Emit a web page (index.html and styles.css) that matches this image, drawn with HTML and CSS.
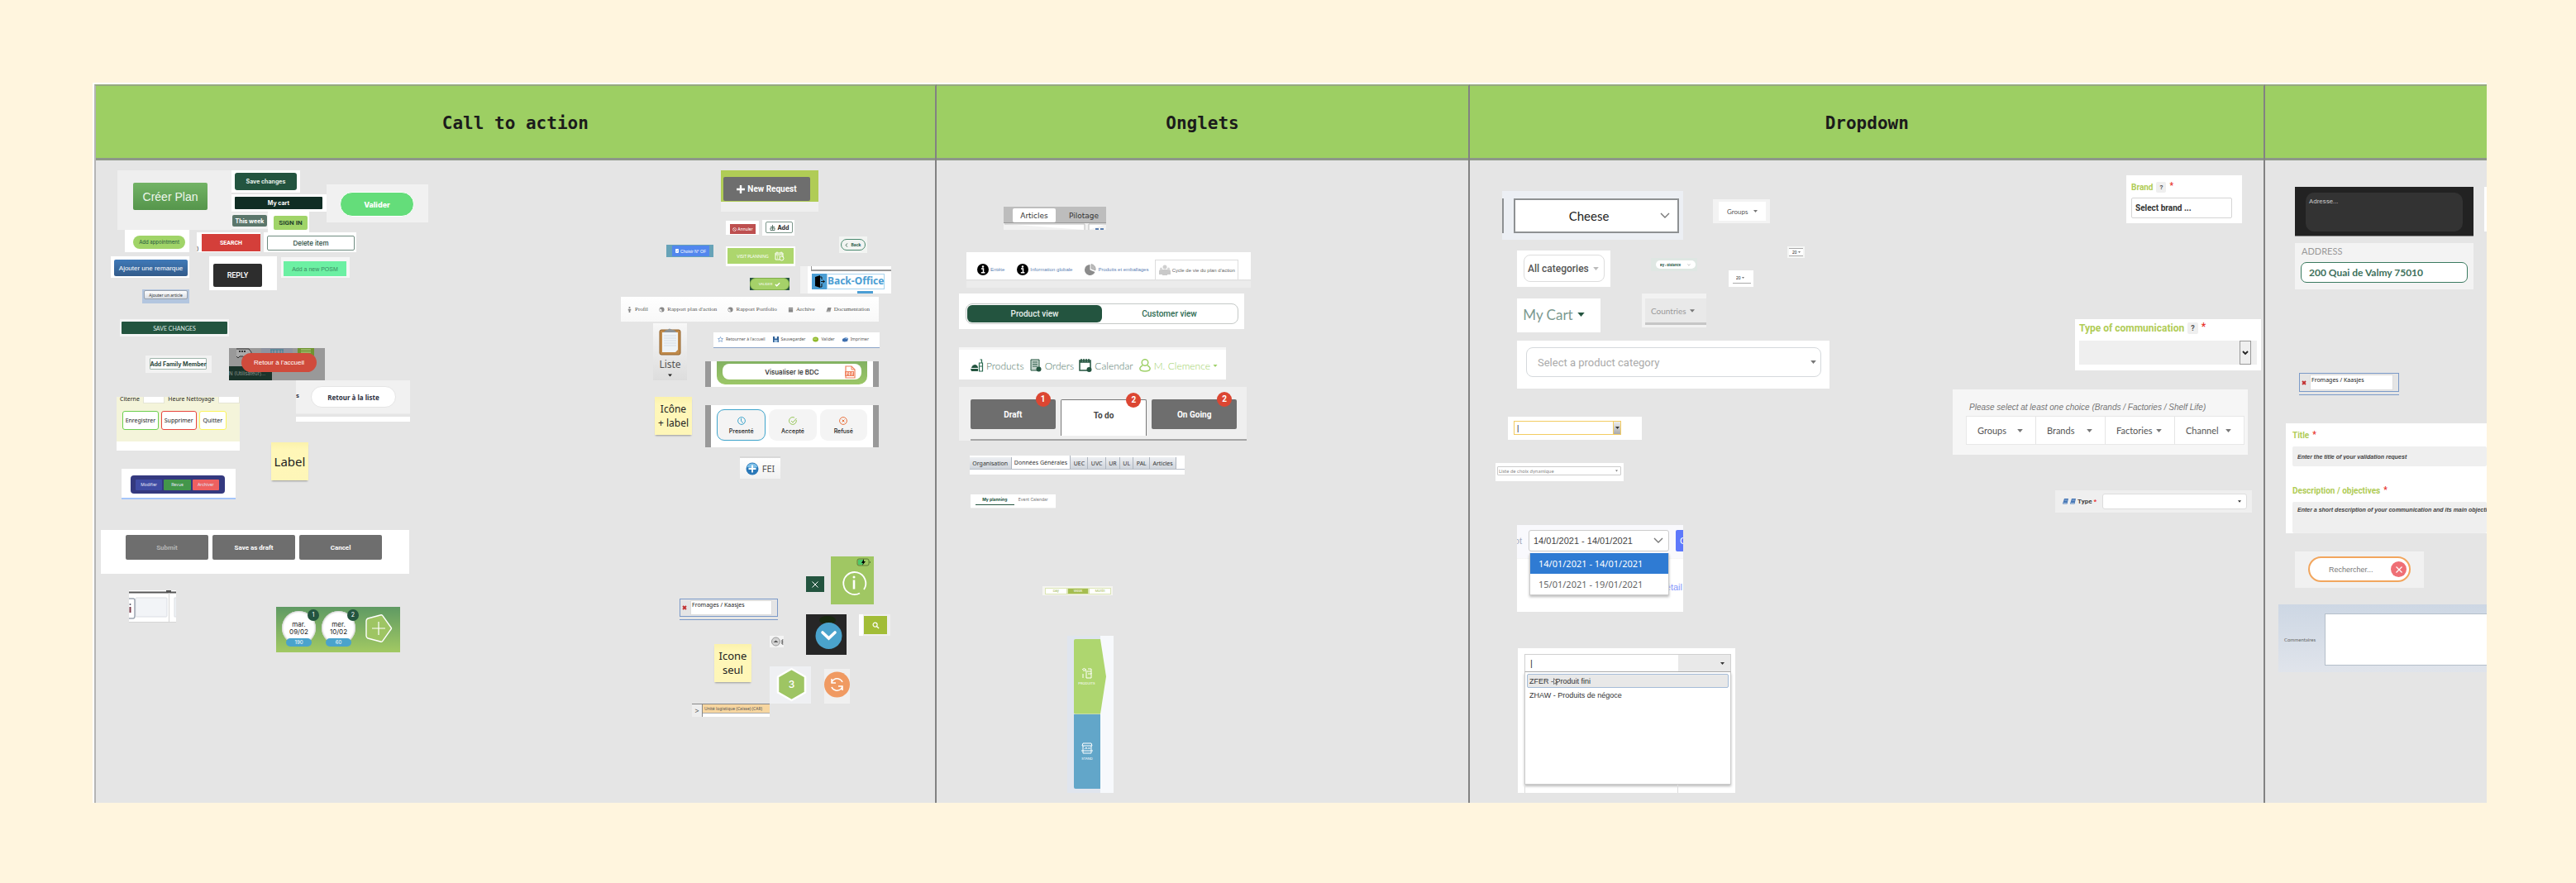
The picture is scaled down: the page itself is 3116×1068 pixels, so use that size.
FILE: index.html
```html
<!DOCTYPE html>
<html lang="fr">
<head>
<meta charset="utf-8">
<title>UI inventory</title>
<link rel="stylesheet" href="styles.css">
</head>
<body>
<svg class="defs" aria-hidden="true">
  <symbol id="caret" viewBox="0 0 10 6"><path d="M0 0h10L5 6z" fill="currentColor"/></symbol>
  <symbol id="chevron" viewBox="0 0 12 8"><path d="M1 1l5 5 5-5" fill="none" stroke="currentColor" stroke-width="1.4"/></symbol>
  <symbol id="info" viewBox="0 0 14 14"><circle cx="7" cy="7" r="7" fill="#000"/><path d="M5 6h2.500v4.500M4.800 10.700h4.600" stroke="#fff" stroke-width="1.500" fill="none"/><circle cx="7" cy="3.500" r="1.200" fill="#fff"/></symbol>
  <symbol id="cube" viewBox="0 0 8 8"><circle cx="4" cy="4" r="3.500" fill="#888"/><path d="M4 4L1 2.500v3L4 7z" fill="#eee"/></symbol>
  <symbol id="cross" viewBox="0 0 6 6"><path d="M1 1l4 4M5 1L1 5" stroke="#c22f2f" stroke-width="1.800"/></symbol>
  <symbol id="book" viewBox="0 0 7 7"><path d="M2 0h5L5.500 6.500H0z" fill="#4a7ab8"/><path d="M2.500 2h3M1 5.500h4" stroke="#cfdcec" stroke-width=".6"/></symbol>
</svg>
<main class="board">

  <section class="column">
    <h2>Call to action</h2>
    <div class="pin plan"><button>Créer Plan</button></div>
    <div class="pin save"><button>Save changes</button></div>
    <div class="pin cart"><button>My cart</button></div>
    <div class="pin week"><button>This week</button></div>
    <div class="pin signin"><button>SIGN IN</button></div>
    <div class="pin valider"><button>Valider</button></div>
    <div class="pin appointment"><button>Add appointment</button></div>
    <div class="pin search"><span>)</span><button>SEARCH</button></div>
    <div class="pin delete"><button>Delete item</button></div>
    <div class="pin remark"><button>Ajouter une remarque</button></div>
    <div class="pin reply"><button>REPLY</button></div>
    <div class="pin posm"><button>Add a new POSM</button></div>
    <div class="pin article"><button>Ajouter un article</button></div>
    <div class="pin savebar"><button>SAVE CHANGES</button></div>
    <div class="pin family"><button>Add Family Member</button></div>
    <div class="pin home">
      <svg class="home-art" viewBox="0 0 116 39" aria-hidden="true">
        <rect x="39" width="38" height="20" fill="#8e93a0"/>
        <path d="M9 1h15l3 4v5h-4l-3 3-3-3h-4l-2 2-2-2" fill="#aaa" stroke="#333"/><path d="M12 4h9" stroke="#333" stroke-width="2" stroke-dasharray="2 1"/>
        <path d="M50 2h16M51 2v5h14V2M54 2v5M58 2v5M62 2v5" stroke="#3b7e93" fill="none"/>
        <rect x="83" width="20" height="9" fill="#6f9432"/><path d="M87 2h12M87 5h12" stroke="#b9cf8d"/>
        <rect y="22" width="52" height="17" fill="#1a332a"/>
      </svg>
      <small>N (Utilisateur)...</small>
      <button>Retour à l'accueil</button>
    </div>
    <div class="pin list"><b>s</b><button>Retour à la liste</button></div>
    <div class="pin cleaning">
      <div class="cleaning-fields"><label for="tank">Citerne</label><input id="tank"><label for="hour">Heure Nettoyage</label><input id="hour" class="cut"></div>
      <div class="cleaning-actions"><button class="ok">Enregistrer</button><button class="ko">Supprimer</button><button class="quit">Quitter</button></div>
    </div>
    <div class="pin note note-label">Label</div>
    <div class="pin review"><div><button>Modifier</button><button class="go">Revue</button><button class="stop">Archiver</button></div></div>
    <div class="pin submit"><button disabled>Submit</button><button>Save as draft</button><button>Cancel</button></div>
    <div class="pin scrap">
      <svg viewBox="0 0 57 39" aria-hidden="true"><path d="M0 2.500h57" stroke="#555" stroke-width="2"/><path d="M45 0h6v3h-6z" fill="#555"/><rect x="8" y="9" width="38" height="23" rx="1" fill="#f2f4f7" stroke="#dcdfe4"/><path d="M0 10h5q2 0 2 2v19q0 3-2 3H0" fill="#fff" stroke="#9ea7b3" stroke-width="1.500"/><path d="M1.500 20v7" stroke="#7a3b4a" stroke-width="2"/><circle cx="1.500" cy="17" r="1" fill="#556"/><path d="M48.500 3v36M0 38.500h57" stroke="#d5d5d5"/><path d="M57 9h-2v23h2" fill="#eef1f5" stroke="#dcdfe4"/></svg>
    </div>
    <div class="pin days">
      <button class="day">mar.<br>09/02<i>1</i><span>190</span></button>
      <button class="day">mer.<br>10/02<i>2</i><span>60</span></button>
      <button class="add-day" aria-label="Ajouter un jour"><svg viewBox="0 0 34 36"><path d="M4 6L19 2q2-1 3 1l10 14q1 1 0 2L22 33q-1 2-3 1L4 30q-2-1-2-3V9q0-2 2-3z" fill="#9ec563" stroke="#fff" stroke-width="1.400"/><path d="M17 10v16M9 18h16" stroke="#fff" stroke-width="1.200"/></svg></button>
    </div>

    <div class="pin request"><button><svg viewBox="0 0 10 10"><path d="M5 0v10M0 5h10" stroke="#fff" stroke-width="2.400"/></svg>New Request</button></div>
    <div class="pin cancel"><button><svg viewBox="0 0 6 6"><circle cx="3" cy="3" r="2.400" fill="none" stroke="#fff" stroke-width=".7"/><path d="M1.300 1.300l3.400 3.400" stroke="#fff" stroke-width=".7"/></svg>Annuler</button></div>
    <div class="pin add"><button><svg viewBox="0 0 7 7"><path d="M3.500 0v6M1 2.500h5M.5 4h6M1 6.500h5M1 4v2.500M6 4v2.500" fill="none" stroke="#3f5f52" stroke-width=".8"/></svg>Add</button></div>
    <div class="pin back"><button><svg viewBox="0 0 4 6"><path d="M3 .5L1 3l2 2.500" fill="none" stroke="#23543f"/></svg>Back</button></div>
    <div class="pin choose"><button><svg viewBox="0 0 5 6"><rect width="5" height="6" rx="1" fill="#fff"/><path d="M1 3l1 1 2-2" stroke="#5287ee" fill="none" stroke-width=".8"/></svg>Choisir N° OF</button></div>
    <div class="pin visit"><button>VISIT PLANNING<svg viewBox="0 0 12 12"><path d="M1 2h9v5M1 2v8h5M1 4h9M3 .5v2M8 .5v2M3 6h1M5 6h1M3 8h1" fill="none" stroke="#fff"/><circle cx="8.500" cy="8.500" r="2.500" fill="none" stroke="#fff"/></svg></button></div>
    <div class="pin office">
      <a href="#"><svg viewBox="0 0 18 19"><rect width="18" height="19" fill="#4b9ed4"/><path d="M4 4l6-2v15l-6-2z"/><path d="M10 4h2v3M12 12v4h-2M11 9.500h4M13.500 8l2 1.500-2 1.500" fill="none" stroke="#111"/></svg><span>Back-Office</span></a>
      <hr>
    </div>
    <div class="pin confirm"><button>VALIDER<svg viewBox="0 0 8 6"><path d="M1 3l2 2 4-4" fill="none" stroke="#fff" stroke-width="1.600"/></svg></button></div>
    <nav class="pin sitenav">
      <a href="#"><svg viewBox="0 0 8 8"><circle cx="4" cy="1.200" r="1.200" fill="#888"/><path d="M2 3h4v2H5v3H3V5H2z" fill="#888"/></svg>Profil</a>
      <a href="#"><svg><use href="#cube"/></svg>Rapport plan d'action</a>
      <a href="#"><svg><use href="#cube"/></svg>Rapport Portfolio</a>
      <a href="#"><svg viewBox="0 0 8 8"><path d="M1 1h6v6.500H1z" fill="#888"/><path d="M1 3h6" stroke="#eee" stroke-width=".5"/></svg>Archive</a>
      <a href="#"><svg viewBox="0 0 8 8"><path d="M2.500 1h5L6 7H.5z" fill="#888"/><path d="M1.500 6h4" stroke="#eee" stroke-width=".6"/></svg>Documentation</a>
    </nav>
    <div class="pin liste"><button>
      <svg viewBox="0 0 27 34"><rect x="1" y="3" width="25" height="30" rx="2" fill="#c08a4a" stroke="#94642c"/><path d="M4 6h19v21l-3 3H4z" fill="#eef3f7"/><path d="M6 10h15M6 13h15M6 16h15M6 19h15M6 22h15" stroke="#c8d3dc" stroke-width=".7"/><path d="M6 6q1-3 5-3 1-3 5 0 4 0 5 3z" fill="#8e9498"/></svg>Liste<svg class="tri"><use href="#caret"/></svg></button></div>
    <div class="pin tools">
      <button><svg viewBox="0 0 7 7"><path d="M3.500.5l1 2h2L5 4l.5 2.300-2-1-2 1L2 4 .5 2.500h2z" fill="none" stroke="#6a93c4" stroke-width=".7"/></svg>Retourner à l'accueil</button>
      <button><svg viewBox="0 0 7 7"><rect width="7" height="7" fill="#2d5f96"/><rect x="2" width="3" height="2.500" fill="#dfe9f3"/><rect x="1.500" y="4" width="4" height="3" fill="#9fc1df"/></svg>Sauvegarder</button>
      <button><svg viewBox="0 0 8 7"><ellipse cx="4" cy="3.500" rx="4" ry="3.400" fill="#8fb92b"/><path d="M1 3h5" stroke="#dcec9f"/></svg>Valider</button>
      <button><svg viewBox="0 0 8 7"><path d="M0 3l4-2 4 1-1 4-4 1-3-1z" fill="#3f6fae"/><path d="M3 2l4-2v3z" fill="#9fc1e8"/></svg>Imprimer</button>
    </div>
    <div class="pin pdf"><div><button>Visualiser le BDC<svg viewBox="0 0 13 16"><path d="M1 15V1h7l4 4v10z" fill="none" stroke="#f0825f" stroke-width="1.200"/><path d="M8 1v4h4" fill="none" stroke="#f0825f"/><rect y="7" width="11" height="6" fill="#f0825f"/><path d="M2 12V8.500h1v1.500H2M5 8.500v3h1v-3zM8.500 12V8.500H10M8.500 10H10" fill="none" stroke="#fff" stroke-width=".7"/></svg></button></div></div>
    <div class="pin note note-icon">Icône<br>+ label</div>
    <div class="pin states"><div>
      <button class="on"><svg viewBox="0 0 10 10"><g fill="none" stroke="#3fa5cc"><circle cx="5" cy="5" r="4.400"/><path d="M4.500 2v3.500L7 7.500"/></g></svg>Presenté</button>
      <button><svg viewBox="0 0 10 10"><g fill="none" stroke="#97c65a"><path d="M9.200 4A4.400 4.400 0 1 1 7 1.100M3 5l2 2 4.500-5"/></g></svg>Accepté</button>
      <button><svg viewBox="0 0 10 10"><g fill="none" stroke="#e9733f"><circle cx="5" cy="5" r="4.400"/><path d="M3.500 3.500l3 3M6.500 3.500l-3 3"/></g></svg>Refusé</button>
    </div></div>
    <div class="pin fei"><button><svg viewBox="0 0 16 16"><circle cx="8" cy="8" r="7.500" fill="#2a78b8"/><path d="M1.500 6a7 7 0 0 1 13 0q-6 2-13 0z" fill="#7fc0e8"/><path d="M8 3.500v9M3.500 8h9" stroke="#fff" stroke-width="1.800"/></svg>FEI</button></div>

    <div class="pin infobox"><button aria-label="Information"><svg viewBox="0 0 52 58"><rect x="32" y="3" width="14" height="8" rx="2" fill="none" stroke="#5d7c38"/><rect x="33" y="4" width="6" height="6" fill="#4cc96a"/><path d="M47.500 6v2" stroke="#5d7c38"/><path d="M40 3l-3 5h2l-1 3 4-5h-2z"/><path d="M35 44.500A13.500 13.500 0 1 1 40 40" fill="none" stroke="#fff" stroke-width="1.800"/><path d="M28 28.500v11" stroke="#fff" stroke-width="2.600"/><circle cx="28" cy="25" r="1.500" fill="#fff"/></svg></button></div>
    <div class="pin close"><button aria-label="Fermer"><svg viewBox="0 0 8 8"><path d="M.5.5l7 7M7.500.5l-7 7" stroke="#fff"/></svg></button></div>
    <div class="pin kaas kaas-a"><div><svg><use href="#cross"/></svg><input aria-label="Rayon" value="Fromages / Kaasjes"></div></div>
    <div class="pin up"><svg viewBox="0 0 17 14"><circle cx="7.500" cy="7" r="5" fill="#d4d4d4" stroke="#999"/><path d="M4.500 8l3-2.500 3 2.500z" fill="#555"/><path d="M16.500 5h-1.500v5h1.500M15 7.500h1.500" stroke="#444" fill="none"/></svg></div>
    <div class="pin down"><button aria-label="Ouvrir"><svg viewBox="0 0 49 49"><ellipse cx="26" cy="7" rx="10" ry="5" fill="#182810"/><circle cx="27.500" cy="26" r="16" fill="#4aa3cc"/><path d="M20 22l7.500 7 7.500-7" fill="none" stroke="#fff" stroke-width="3.600" stroke-linecap="round"/></svg></button></div>
    <div class="pin find"><button aria-label="Rechercher"><svg viewBox="0 0 10 10"><circle cx="4" cy="4" r="2.800" fill="none" stroke="#fff" stroke-width="1.300"/><path d="M6 6l3 3" stroke="#fff" stroke-width="1.500"/></svg></button></div>
    <div class="pin note note-only">Icone<br>seul</div>
    <div class="pin hex"><svg viewBox="0 0 50 45" aria-hidden="true"><path d="M26.500 3l16.500 9.500v19L26.500 41 10 31.500v-19z" fill="#9ec563" stroke="#fff" stroke-width="2.500" stroke-linejoin="round"/></svg><b>3</b></div>
    <div class="pin sync"><button aria-label="Actualiser"><svg viewBox="0 0 31 42"><circle cx="15.500" cy="19" r="15.500" fill="#f09a62"/><path d="M9 16q3-5 8-4 4 1 5 4M22 22q-3 5-8 4-4-1-5-4M9 12v5h5M22 26v-5h-5" fill="none" stroke="#fff" stroke-width="1.500"/></svg></button></div>
    <div class="pin unit"><button>&gt;</button><span>Unité logistique (Caisse) (CAR)</span></div>
  </section>

  <section class="column">
    <h2>Onglets</h2>
    <div class="pin pilot"><div><button class="on">Articles</button><button>Pilotage</button></div><svg viewBox="0 0 124 8"><path d="M1 1h97v7M103 8V1h21" fill="#fff" stroke="#bbb"/><path d="M111 7h4M117 7h4" stroke="#5b7fb0" stroke-width="2"/></svg></div>
    <nav class="pin cycle">
      <a href="#"><svg><use href="#info"/></svg>Entête</a>
      <a href="#"><svg><use href="#info"/></svg>Information globale</a>
      <a href="#"><svg viewBox="0 0 14 14"><path d="M6.500 1v6.500l6 2.500A6.500 6.500 0 1 1 6.500 1z" fill="#8c8c8c"/><path d="M8 .5A6 6 0 0 1 13 8L8 6z" fill="#bbb" stroke="#999" stroke-width=".6"/></svg>Produits et emballages</a>
      <a href="#" class="on"><svg viewBox="0 0 14 14"><path d="M0 12V8q0-2 2-2h10q2 0 2 2v4zM4 12V7h6v6H4z" fill="#c9c9c9"/><circle cx="7" cy="3" r="2.500" fill="#cfcfcf"/><circle cx="2.500" cy="5" r="1.600" fill="#d8d8d8"/><circle cx="11.500" cy="5" r="1.600" fill="#d8d8d8"/></svg>Cycle de vie du plan d'action</a>
    </nav>
    <div class="pin views"><div><button class="on">Product view</button><button>Customer view</button></div></div>
    <nav class="pin shop">
      <a href="#"><svg viewBox="0 0 16 16"><path d="M0 12h9v3H1zM1 11q1-4 5-4 3 1 3 4z" fill="#23543f"/><path d="M10.500 5h4v10h-4zM11.500 1h2v4M10.500 9h4" fill="none" stroke="#2b6b50" stroke-width="1.200"/></svg>Products</a>
      <a href="#"><svg viewBox="0 0 14 16"><path d="M1 1h10v13H1z" fill="#c4d3cc" stroke="#23543f"/><path d="M3 4h6M3 6.500h6M3 9h6" stroke="#23543f" stroke-width=".9"/><circle cx="10.500" cy="12.500" r="3" fill="#23543f"/></svg>Orders</a>
      <a href="#"><svg viewBox="0 0 16 16"><path d="M1 2h13v12H1zM1 4h13" fill="none" stroke="#23543f" stroke-width="1.500"/><path d="M3 0v4M6 0v4M9 0v4M12 0v4" stroke="#23543f" stroke-width="1.500"/><circle cx="12.500" cy="13" r="3" fill="#23543f"/></svg>Calendar</a>
      <a href="#" class="me"><svg viewBox="0 0 14 16"><circle cx="7" cy="4.500" r="3.800" fill="none" stroke="#9fd16a" stroke-width="1.500"/><path d="M4 8q-5 3-2 6 5 2 10 0 3-3-2-6" fill="none" stroke="#9fd16a" stroke-width="1.500"/></svg>M. Clemence<svg class="tri"><use href="#caret"/></svg></a>
    </nav>
    <div class="pin progress"><button>Draft<i>1</i></button><button class="on">To do<i>2</i></button><button>On Going<i>2</i></button></div>
    <div class="pin general"><div><button>Organisation</button><button class="on">Données Générales</button><button>UEC</button><button>UVC</button><button>UR</button><button>UL</button><button>PAL</button><button>Articles</button></div></div>
    <div class="pin planning"><button class="on">My planning</button><button>Event Calendar</button></div>
    <div class="pin period"><button>Day</button><button class="on">Week</button><button>Month</button></div>
    <div class="pin steps">
      <button class="step-a"><svg viewBox="0 0 14 14"><path d="M2 4h4v9h6V7M1 3q2-3 5 0M7 5h5v3H8M8 2h4v3M2 13V8" fill="none" stroke="#fff"/></svg>PRODUITS</button>
      <button class="step-b"><svg viewBox="0 0 14 14"><path d="M1 4l1-3h10l1 3zM2 4v9h10V4M0 10h14M4 8l2-2 1 2M8 7h3" fill="none" stroke="#fff"/></svg>STAND</button>
    </div>
  </section>

  <section class="column">
    <h2>Dropdown</h2>
    <div class="pin cheese"><i></i><div class="sel"><select aria-label="Famille"><option>Cheese</option></select><svg class="chev"><use href="#chevron"/></svg></div></div>
    <div class="pin groups"><div class="sel"><select aria-label="Groupe"><option>Groups</option></select><svg><use href="#caret"/></svg></div></div>
    <div class="pin cats"><div class="sel"><select aria-label="Catégories"><option>All categories</option></select><svg><use href="#caret"/></svg></div></div>
    <div class="pin micro"><div class="sel"><select aria-label="Ville"><option>By : distance</option></select><svg class="chev"><use href="#chevron"/></svg></div></div>
    <div class="pin qty-a"><div class="sel"><select aria-label="Quantité"><option>20</option></select><svg><use href="#caret"/></svg></div></div>
    <div class="pin qty-b"><div class="sel"><select aria-label="Lignes"><option>20</option></select><svg><use href="#caret"/></svg></div></div>
    <div class="pin mycart"><button>My Cart<svg><use href="#caret"/></svg></button></div>
    <div class="pin countries"><div class="sel"><select aria-label="Pays"><option>Countries</option></select><svg><use href="#caret"/></svg></div></div>
    <div class="pin category"><div class="sel"><select aria-label="Catégorie de produit"><option>Select a product category</option></select><svg><use href="#caret"/></svg></div></div>
    <div class="pin yellow"><input aria-label="Saisie" value="|"><button aria-label="Ouvrir la liste"><svg><use href="#caret"/></svg></button></div>
    <div class="pin dynamic"><div class="sel"><select aria-label="Liste"><option>Liste de choix dynamique</option></select><svg><use href="#caret"/></svg></div></div>
    <div class="pin dates">
      <header><span>ot</span><div class="sel"><select aria-label="Période"><option>14/01/2021 - 14/01/2021</option></select><svg class="chev"><use href="#chevron"/></svg></div><button>C</button></header>
      <a href="#">étail</a>
      <ul><li class="on">14/01/2021 - 14/01/2021</li><li>15/01/2021 - 19/01/2021</li></ul>
    </div>
    <div class="pin combo">
      <div class="combo-field"><input aria-label="Type d'article" value="|"><button aria-label="Ouvrir"><svg><use href="#caret"/></svg></button></div>
      <ul><li class="on">ZFER - Produit fini<svg viewBox="0 0 6 9"><path d="M.5.5v7l2-1.500 1 2.500 1-.5-1-2.300 2-.2z" fill="none" stroke="#555" stroke-width=".7"/></svg></li><li>ZHAW - Produits de négoce</li></ul>
      <div class="combo-next"></div>
    </div>
    <div class="pin brand"><div class="cap"><label for="brand">Brand</label><b>?</b><em>*</em></div><select id="brand"><option>Select brand ...</option></select></div>
    <div class="pin comm"><div class="cap"><label for="comm">Type of communication</label><b>?</b><em>*</em></div><div class="sel"><select id="comm"><option></option></select><span><svg viewBox="0 0 8 6"><path d="M1 1l3 3 3-3" fill="none" stroke="#222" stroke-width="1.800"/></svg></span></div></div>
    <div class="pin choice"><p>Please select at least one choice (Brands / Factories / Shelf Life)</p>
      <div class="choice-row">
        <div class="sel"><select aria-label="Groups"><option>Groups</option></select><svg><use href="#caret"/></svg></div>
        <div class="sel"><select aria-label="Brands"><option>Brands</option></select><svg><use href="#caret"/></svg></div>
        <div class="sel"><select aria-label="Factories"><option>Factories</option></select><svg><use href="#caret"/></svg></div>
        <div class="sel"><select aria-label="Channel"><option>Channel</option></select><svg><use href="#caret"/></svg></div>
      </div>
    </div>
    <div class="pin type"><svg><use href="#book"/></svg><svg><use href="#book"/></svg><label for="type">Type</label><em>*</em><div class="sel"><select id="type"><option></option></select><svg><use href="#caret"/></svg></div></div>
  </section>

  <section class="column">
    <h2></h2>
    <div class="pin adresse"><textarea aria-label="Adresse">Adresse...</textarea></div>
    <div class="pin sliver"></div>
    <div class="pin address"><label for="address">ADDRESS</label><input id="address" value="200 Quai de Valmy 75010"></div>
    <div class="pin kaas kaas-b"><div><svg><use href="#cross"/></svg><input aria-label="Rayon" value="Fromages / Kaasjes"></div></div>
    <div class="pin form">
      <div class="cap"><label for="title">Title</label><em>*</em></div><input id="title" placeholder="Enter the title of your validation request">
      <div class="cap"><label for="desc">Description / objectives</label><em>*</em></div><textarea id="desc" placeholder="Enter a short description of your communication and its main objectives"></textarea>
    </div>
    <div class="pin rechercher"><div><input type="text" aria-label="Rechercher" placeholder="Rechercher..."><button aria-label="Effacer"><svg viewBox="0 0 8 8"><path d="M.5.5l7 7M7.500.5l-7 7" stroke="#fff" stroke-width="1.200"/></svg></button></div></div>
    <div class="pin comments"><label for="comments">Commentaires</label><textarea id="comments"></textarea></div>
  </section>
</main>
</body>
</html>
```
FILE: styles.css
```css
:root {
  --ui: "Inter", "Liberation Sans", sans-serif;
  --arial: "Liberation Sans", Arial, sans-serif;
  --narrow: "Liberation Sans Narrow", "Roboto", sans-serif;
  --noto: "Noto Sans", "Open Sans", sans-serif;
  --lato: "Lato", sans-serif;
  --roboto: "Roboto", sans-serif;
  --forest: #23543f;
}
* { box-sizing: border-box; }
body {
  margin: 0; min-height: 100vh; padding: 100px 108px 97px 112px;
  display: flex; background: #fff5de; font-family: var(--ui); color: #222;
}
.defs { position: absolute; width: 0; height: 0; }
.board {
  position: relative; flex: 1; min-width: 0; overflow: hidden; display: grid;
  grid-template-columns: 1019fr 646fr 962fr 268fr;
  border: solid #fff; border-width: 2px 0 0 2px; background: #e5e5e5;
}
.column { border-top: 2px solid #97a97f; border-right: 2px solid #828282; min-width: 0; }
.column:first-child { border-left: 2px solid #b5b5b5; }
.column:last-child { border-right: 0; }
h2 {
  margin: 0; height: 90px; padding-top: 3px; display: flex; align-items: center; justify-content: center;
  background: #9dcf63; border-bottom: 3px solid #8d978a;
  font: bold 21px "DejaVu Sans Mono", "Liberation Mono", monospace; color: #1b1b1b;
}
button, input, select, textarea { font: inherit; color: inherit; border: 0; padding: 0; margin: 0; background: none; min-width: 0; min-height: 0; border-radius: 2px; }
button { display: flex; align-items: center; justify-content: center; white-space: nowrap; }
textarea { resize: none; overflow: hidden; }
select { appearance: none; flex: 1; align-self: stretch; }
a { color: inherit; text-decoration: none; }
svg { display: block; flex: none; }
ul { list-style: none; margin: 0; padding: 0; }
i, em { font-style: normal; }
input::placeholder, textarea::placeholder { color: inherit; opacity: 1; }

/* Clippings pinned on the free canvas */
.pin { position: absolute; display: flex; background: #fff; font-size: 7px; line-height: 1; overflow: hidden; white-space: nowrap; margin: -2px 0 0 -2px; }
.pin > button { flex: 1; }
.pin > div { min-width: 0; }
.sel { position: relative; flex: 1; display: flex; align-items: center; background: #fff; }
.sel > svg { position: absolute; right: 6px; width: 5px; height: 3px; color: #777; pointer-events: none; }

/* Call to action, left group */
.plan { left: 30px; top: 106px; width: 138px; height: 72px; padding: 15px 29px 24px 19px; background: #efefef; }
.plan button { background: linear-gradient(#72b365, #55954b); color: #eef7ec; font: 14px var(--arial); }
.save { left: 168px; top: 106px; width: 83px; height: 27px; padding: 3px 4px; }
.save button { background: var(--forest); color: #e4eee9; font-weight: 700; border-radius: 3px; }
.cart { left: 168px; top: 135px; width: 115px; height: 21px; padding: 3px 5px 3px 4px; }
.cart button { background: #102d24; color: #fff; font-weight: 700; border-radius: 1px; }
.week { left: 168px; top: 157px; width: 44px; height: 20px; padding: 3px 1px; background: #f2f2f2; }
.week button { background: #5b766b; color: #fff; font-weight: 700; }
.signin { left: 212px; top: 156px; width: 50px; height: 25px; padding: 5px 2px 3px 7px; }
.signin button { background: #a0d468; color: #24412c; font: bold 8px var(--roboto); }
.valider { left: 283px; top: 123px; width: 123px; height: 46px; padding: 9px 17px 7px 16px; background: #f1f1f1; }
.valider button { background: #64dd7a; border: 1px solid #fff; border-radius: 15px; color: #fff; font-size: 9px; font-weight: 800; }
.appointment { left: 39px; top: 178px; width: 78px; height: 27px; padding: 7px 5px 4px 10px; }
.appointment button { background: #a0d468; color: var(--forest); border-radius: 8px; font-size: 6px; }
.search { left: 126px; top: 181px; width: 77px; height: 24px; padding: 2px 0 1px; }
.search span { width: 6px; align-self: flex-end; }
.search button { background: #d43f3a; color: #fff; font: bold 7px var(--roboto); border-radius: 0; }
.delete { left: 207px; top: 181px; width: 112px; height: 24px; padding: 4px 2px 2px 4px; }
.delete button { border: 1px solid #6f8c81; color: #26473b; font-size: 8px; font-weight: 500; }
.remark { left: 22px; top: 210px; width: 95px; height: 26px; padding: 4px 2px 2px 4px; }
.remark button { background: linear-gradient(#3f79b8, #335b8a); color: #fff; font: 8px var(--arial); }
.reply { left: 141px; top: 210px; width: 82px; height: 41px; padding: 9px 18px 4px 5px; }
.reply button { background: #2d2d2d; color: #fff; font: 500 9px var(--roboto); }
.posm { left: 228px; top: 211px; width: 83px; height: 25px; padding: 5px 4px 2px 3px; background: #f6f6f6; }
.posm button { background: #6cf0a3; color: #3b8a62; font: 7px var(--arial); border-radius: 0; }
.article { left: 60px; top: 250px; width: 57px; height: 17px; padding: 1px 2px 5px; background: #b3c6df; }
.article button { background: linear-gradient(#fff, #d8dce2); border: 1px solid #98a2ae; color: #333; font: 5px var(--noto); }
.savebar { left: 33px; top: 286px; width: 132px; height: 21px; padding: 3px 2px; background: #f4f4f4; }
.savebar button { background: var(--forest); color: #dfe9e4; font: 7px var(--lato); border-radius: 1px; }
.family { left: 64px; top: 330px; width: 80px; height: 21px; padding: 3px 6px 4px 5px; background: #f2f2f2; }
.family button { background: #fff; border: 1px solid #9fb5ab; color: #2c4a3e; font-weight: 700; border-radius: 1px; }
.home { left: 165px; top: 321px; width: 116px; height: 39px; padding: 6px 10px 10px 15px; background: #999; }
.home .home-art { position: absolute; inset: 0; }
.home small { position: absolute; left: 0; bottom: 5px; font-size: 6px; color: #8b9791; }
.home button { position: relative; background: #d04b3c; color: #fff; border-radius: 12px; font: 500 8px var(--arial); }
.list { left: 246px; top: 360px; width: 138px; height: 50px; padding: 7px 17px 17px 0; background: linear-gradient(#f1f1f1 40px, #e5e5e5 41px, #e5e5e5 44px, #fff 44px); }
.list b { width: 18px; padding-top: 8px; color: #334; }
.list button { background: #fff; border: 1px solid #e5e5e5; border-radius: 13px; font: bold 8px var(--noto); color: #2d3040; }
.cleaning { left: 29px; top: 380px; width: 149px; height: 65px; flex-direction: column; gap: 9px; background: linear-gradient(#f4f4da 54px, #fff 54px); font-family: var(--noto); }
.cleaning-fields { display: flex; gap: 4px; height: 8px; padding-left: 4px; line-height: 5px; }
.cleaning-fields input { width: 57px; background: #fff; border: 1px solid #e5e5d5; border-top: 0; border-radius: 0; }
.cleaning-actions { display: flex; gap: 3px; height: 23px; padding: 0 16px 0 7px; }
.cleaning-actions button { flex: 44; background: #fff; border: 1px solid #6ccf4e; border-radius: 3px; }
.cleaning-actions .ko { flex: 43; border-color: #e8443c; }
.cleaning-actions .quit { flex: 33; border-color: #fbf45c; }
.note { align-items: center; justify-content: center; text-align: center; width: 45px; height: 46px; background: linear-gradient(#fbf2ab, #fff7b8 20%, #fef6b8); font: 13px/17px var(--noto); box-shadow: 0 2px 2px -1px #999; }
.note-label { left: 216px; top: 435px; font-size: 15px; }
.note-icon { left: 680px; top: 380px; font-size: 12px; }
.note-only { left: 752px; top: 679px; }
.review { left: 35px; top: 467px; width: 138px; height: 37px; padding: 8px 13px 5px 11px; border-bottom: 2px solid #a5c6fa; }
.review div { flex: 1; display: flex; gap: 2px; padding: 5px 7px 4px 6px; background: #34397f; border-radius: 4px; }
.review button { flex: 1; background: #3f4ba3; color: #e2e5f5; font-size: 5px; border-radius: 1px; }
.review .go { background: #43964a; }
.review .stop { background: #ee6060; }
.submit { left: 10px; top: 541px; width: 373px; height: 53px; padding: 6px 33px 17px 30px; gap: 5px; }
.submit button { background: #6e6e6e; color: #fff; font: bold 8px var(--narrow); }
.submit button:disabled { color: #b5b5b5; }
.scrap { left: 44px; top: 614px; width: 57px; height: 39px; }
.days { left: 222px; top: 634px; width: 150px; height: 55px; padding: 5px 10px 8px 7px; gap: 7px; background: linear-gradient(#5f9a63, #a2c963); }
.days .day { position: relative; flex: none; width: 41px; height: 41px; border-radius: 50%; background: #fff; box-shadow: inset 0 0 2px 1px #ccc; font-size: 8px; line-height: 9px; }
.day i { position: absolute; right: -4px; top: -2px; width: 14px; height: 14px; border-radius: 50%; background: var(--forest); color: #fff; font-size: 7px; line-height: 14px; }
.day span { position: absolute; left: 5px; bottom: -2px; width: 31px; height: 10px; border-radius: 5px; background: #4aa3cc; color: #fff; font-size: 6px; line-height: 10px; }
.days .add-day { margin-left: 4px; }
.add-day svg { width: 34px; height: 36px; }

/* Call to action, icon group */
.request { left: 760px; top: 106px; width: 118px; height: 50px; padding: 8px 10px 13px 3px; background: linear-gradient(#b0cc56 38px, #efefef 38px); }
.request button { gap: 3px; background: #6e6e6e; color: #fff; font: bold 10px var(--narrow); }
.request svg { width: 10px; height: 10px; }
.cancel { left: 766px; top: 167px; width: 40px; height: 17px; padding: 4px 4px 1px 5px; }
.cancel button { gap: 1px; background: #bd4f4f; color: #fff; font-size: 5px; border-radius: 0; }
.cancel svg { width: 5px; height: 5px; }
.add { left: 810px; top: 166px; width: 39px; height: 19px; padding: 2px 2px 3px 4px; }
.add button { gap: 3px; border: 1px solid #7c968b; font-weight: 700; }
.add svg { width: 7px; height: 7px; }
.back { left: 903px; top: 186px; width: 34px; height: 20px; padding: 3px 2px; background: #f2f4f2; }
.back button { gap: 3px; border: 1px solid #4b8a70; border-radius: 7px; font-size: 5px; font-weight: 700; color: var(--forest); }
.back svg { width: 4px; height: 5px; }
.choose { left: 694px; top: 196px; width: 57px; height: 15px; padding: 1px 5px 1px 7px; background: #67a3b8; }
.choose button { gap: 2px; background: #5287ee; color: #fff; font: 5px var(--arial); border-radius: 0; }
.choose svg { width: 4px; height: 5px; }
.visit { left: 766px; top: 198px; width: 84px; height: 24px; padding: 2px 2px 3px; }
.visit button { gap: 7px; background: #add66d; color: #fff; font: 5px var(--lato); border-radius: 0; }
.visit svg { width: 12px; height: 12px; }
.office { left: 856px; top: 222px; width: 110px; height: 33px; padding: 9px 9px 5px 14px; background: linear-gradient(90deg, #f1f1f1 9px, #fff 9px); }
.office::before { content: ""; position: absolute; left: 13px; right: 0; top: 0; height: 4px; border: solid #999; border-width: 0 0 2px 1px; }
.office a { display: flex; align-items: stretch; }
.office a svg { width: 18px; height: 19px; }
.office span { border: 1px solid #a9d4ee; color: #4b9ed4; font: bold 12px/16px var(--noto); }
.office hr { position: absolute; left: 69px; bottom: 0; width: 19px; height: 3px; margin: 0; border: 0; background: #4b9ed4; }
.confirm { left: 795px; top: 236px; width: 48px; height: 15px; background: #2b5545; }
.confirm button { gap: 3px; background: #a5d169; color: #fff; font-size: 4px; border: 1px solid #7fae4b; border-radius: 7px; }
.confirm svg { width: 7px; height: 6px; }
.sitenav { left: 639px; top: 259px; width: 312px; height: 30px; padding: 0 11px 0 7px; align-items: center; justify-content: space-between; background: linear-gradient(#fff, #f8f8f8); font: 7px "Liberation Serif", serif; color: #555; }
.sitenav a, .tools button { display: flex; align-items: center; gap: 3px; }
.sitenav svg { width: 7px; height: 7px; }
.liste { left: 678px; top: 291px; width: 41px; height: 69px; background: linear-gradient(#f7f7f7, #ddd); }
.liste button { flex-direction: column; gap: 4px; font: 12px/14px var(--noto); color: #555; }
.liste svg { width: 27px; height: 34px; }
.liste .tri { width: 5px; height: 4px; color: #222; }
.tools { left: 751px; top: 302px; width: 201px; height: 19px; padding: 0 13px 2px 5px; justify-content: space-between; border-bottom: 1px solid #8aa4c8; font: 5px var(--noto); color: #555; }
.pin.tools > button { flex: none; }
.tools svg { width: 7px; height: 7px; }
.pdf, .states { left: 741px; width: 210px; border: solid #999; border-width: 0 7px; }
.pdf { top: 337px; height: 31px; padding: 0 7px 3px; }
.pdf div { flex: 1; display: flex; padding: 3px 7px 6px; background: linear-gradient(#82b162, #9cc767); border-radius: 0 0 10px 10px; }
.pdf button { position: relative; flex: 1; background: #fff; border-radius: 8px; font-size: 8px; font-weight: 500; }
.pdf svg { position: absolute; right: 7px; width: 13px; height: 16px; }
.states { top: 390px; height: 51px; padding: 5px 7px 8px; }
.states div { flex: 1; display: flex; gap: 4px; }
.states button { flex: 1; flex-direction: column; gap: 4px; background: #f4f4f4; border-radius: 9px; font-weight: 500; }
.states .on { border: 1px solid #3fa5cc; }
.states svg { width: 10px; height: 10px; }
.fei { left: 783px; top: 452px; width: 49px; height: 27px; border-top: 2px solid #d9d9d9; background: linear-gradient(#fff, #f1f1f1); }
.fei button { gap: 4px; font: 11px var(--noto); color: #555; }
.fei svg { width: 16px; height: 16px; }
.infobox { left: 893px; top: 573px; width: 52px; height: 58px; background: #a0c763; }
.infobox svg { width: 52px; height: 58px; }
.close { left: 863px; top: 597px; width: 22px; height: 19px; background: var(--forest); }
.close svg { width: 8px; height: 8px; }
.kaas { width: 119px; height: 26px; background: #e5e5e5; border-bottom: 1px solid #7b9ac8; padding-bottom: 3px; font-family: var(--noto); }
.kaas-a { left: 710px; top: 624px; }
.kaas-b { left: 2669px; top: 351px; width: 121px; height: 27px; }
.kaas div { flex: 1; display: flex; align-items: center; gap: 4px; padding: 1px 6px 1px 2px; border: 1px solid #7b9ac8; }
.kaas svg { width: 6px; height: 6px; }
.kaas input { flex: 1; align-self: stretch; padding: 0 0 7px 1px; background: #fff; border: 1px solid #ddd; border-radius: 0; }
.up { left: 819px; top: 669px; width: 17px; height: 14px; background: #f4f4f4; }
.down { left: 863px; top: 643px; width: 49px; height: 49px; background: #262626; }
.down svg { width: 49px; height: 49px; }
.find { left: 927px; top: 643px; width: 38px; height: 26px; padding: 2px 4px 2px 6px; background: linear-gradient(90deg, #fff 5px, #eee 5px); }
.find button { background: #a2bd37; border-radius: 0; }
.find svg { width: 9px; height: 9px; }
.hex { left: 819px; top: 706px; width: 50px; height: 45px; background: #eff0f3; }
.hex svg { width: 50px; height: 45px; }
.hex b { position: absolute; inset: 0; padding-left: 3px; text-align: center; font: 500 12px/44px var(--ui); color: #fff; }
.sync { left: 885px; top: 709px; width: 31px; height: 42px; background: #f0f0f0; }
.sync svg { width: 31px; height: 42px; }
.unit { left: 725px; top: 751px; width: 94px; height: 16px; border-top: 1px solid #888; font: 5px var(--noto); color: #555; }
.pin.unit > button { flex: 0 0 13px; background: #eee; border-right: 1px solid #888; font-size: 9px; border-radius: 0; }
.unit span { flex: 1; height: 11px; padding-left: 2px; line-height: 11px; background: #f7d6a0; border-bottom: 1px solid #aaa; }

/* Onglets */
.pilot { left: 1102px; top: 150px; width: 124px; height: 28px; flex-direction: column; background: #f2f2f2; }
.pilot div { display: flex; height: 20px; padding: 2px 7px 0 11px; gap: 16px; background: #bdbdbd; border-bottom: 1px solid #999; font: 9px "DejaVu Sans", sans-serif; color: #333; }
.pilot .on { width: 52px; background: #fff; }
.pilot svg { width: 124px; height: 8px; }
.cycle { left: 1057px; top: 205px; width: 344px; height: 43px; padding: 9px 15px 0 13px; gap: 15px; background: linear-gradient(#fff 33px, #ddd 33px, #ececec 35px); font: 6px/1 var(--arial); color: #5d83b5; }
.cycle a { display: flex; align-items: center; gap: 2px; height: 24px; }
.cycle svg { width: 14px; height: 14px; }
.cycle .on { flex: 1; justify-content: center; margin-left: -7px; background: #fff; border: 1px solid #ddd; border-bottom: 0; color: #666; }
.views { left: 1048px; top: 255px; width: 345px; height: 43px; padding: 12px 7px 6px 8px; }
.views div { flex: 1; display: flex; padding: 1px; border: 1px solid #c5c9c7; border-radius: 8px; font: 500 10px var(--roboto); color: #2d6b52; }
.views button { flex: 1; border-radius: 6px; }
.views .on { background: var(--forest); color: #e6efeb; }
.shop { left: 1048px; top: 320px; width: 323px; height: 39px; padding: 2px 10px 0 14px; align-items: center; justify-content: space-between; font: 300 12px var(--lato); color: #557a6c; border-top: 3px solid #f6f6f6; }
.shop a { display: flex; align-items: center; gap: 3px; }
.shop svg { width: 16px; height: 16px; }
.shop .me { color: #9fd16a; }
.shop .tri { width: 6px; height: 3px; }
.progress { left: 1048px; top: 368px; width: 348px; height: 65px; padding: 15px 12px 0 14px; gap: 6px; align-items: flex-start; background: #efefef; font: bold 10px var(--narrow); }
.progress::after { content: ""; position: absolute; left: 14px; right: 0; bottom: 0; height: 2px; background: #a5a5a5; }
.progress button { position: relative; height: 36px; background: #6e6e6e; color: #fff; }
.progress .on { height: 44px; padding-bottom: 6px; background: #fff; color: #444; border: 1px solid #777; border-bottom: 0; border-radius: 2px 2px 0 0; }
.progress i { position: absolute; right: 6px; top: -9px; width: 18px; height: 18px; border-radius: 50%; background: #dc4632; color: #fff; line-height: 18px; }
.general { left: 1061px; top: 451px; width: 260px; height: 23px; padding: 1px 0 6px; }
.general div { flex: 1; display: flex; align-items: flex-end; padding-right: 10px; border-bottom: 1px solid #b9bfc8; font: 7px var(--noto); color: #333; }
.general button { height: 14px; flex: auto; background: linear-gradient(#eef0f3, #cfd4db); border: 1px solid #aeb5bf; border-width: 0 1px 0 0; border-radius: 0; }
.general .on { height: 16px; background: #fff; }
.planning { left: 1062px; top: 498px; width: 103px; height: 17px; padding: 0 4px 3px 6px; border-bottom: 1px solid #eee; font-size: 5px; color: #777; }
.planning .on { border-bottom: 1px solid var(--forest); color: var(--forest); font-weight: 700; border-radius: 0; }
.period { left: 1149px; top: 609px; width: 85px; height: 11px; padding: 2px 2px 1px 3px; background: #f5f5f0; font-size: 4px; color: #9bb54a; }
.period button { background: #fff; border: 1px solid #dbe5b5; border-radius: 0; }
.period .on { background: #a5bd50; color: #fff; }
.steps { left: 1179px; top: 669px; width: 56px; height: 190px; padding: 4px 0 5px 8px; flex-direction: column; background: linear-gradient(90deg, #e0e5ee 40px, #f7f9fc 40px); font-size: 4px; color: #fff; }
.steps button { flex-direction: column; gap: 4px; padding-right: 8px; }
.steps svg { width: 14px; height: 14px; }
.steps .step-a { width: 39px; background: #aed66f; clip-path: polygon(0 0, 32px 0, 100% 50%, 32px 100%, 0 100%); }
.steps .step-b { width: 32px; padding: 0; background: #62a6c9; border-radius: 0 0 0 2px; }

/* Dropdown */
.cheese { left: 1705px; top: 131px; width: 219px; height: 59px; padding: 9px 5px 8px 0; gap: 12px; background: #eceff4; }
.cheese i { width: 2px; background: #8e9193; }
.cheese .sel { border: 2px solid #8e9193; }
.cheese select { font: 15px var(--lato); text-align: center; padding-right: 18px; }
.cheese .sel .chev { width: 12px; height: 8px; right: 9px; }
.groups { left: 1960px; top: 141px; width: 69px; height: 29px; padding: 3px 5px 3px 7px; background: #f3f3f3; }
.groups select { padding-left: 10px; font: 8px var(--lato); color: #555; }
.groups .sel > svg { right: 10px; }
.cats { left: 1723px; top: 203px; width: 113px; height: 44px; padding: 5px 7px 6px 8px; }
.cats .sel { border: 1px solid #ddd; border-radius: 8px; }
.cats select { padding-left: 4px; font: 500 12px var(--roboto); color: #555; }
.cats .sel > svg { width: 7px; height: 4px; color: #bbb; }
.micro { left: 1885px; top: 212px; width: 56px; height: 16px; padding: 3px 2px 3px 6px; background: #dfe7e3; }
.micro .sel { border-radius: 5px; }
.micro select { padding-left: 5px; font: bold 4px var(--ui); color: var(--forest); }
.micro .sel > svg { width: 4px; }
.qty-a { left: 2050px; top: 198px; width: 21px; height: 14px; padding: 2px; background: #f5f6f5; }
.qty-a .sel { border: solid #aaa; border-width: 1px 0; }
.qty-a select, .qty-b select { padding-left: 4px; font: 5px var(--arial); }
.qty-a .sel > svg, .qty-b .sel > svg { width: 3px; height: 2px; right: 3px; }
.qty-b { left: 1979px; top: 227px; width: 30px; height: 20px; padding: 3px 3px 4px 5px; }
.qty-b .sel { border-bottom: 1px solid #aaa; }
.qty-b .sel > svg { right: 8px; }
.mycart { left: 1723px; top: 261px; width: 101px; height: 41px; padding: 0 12px 2px 0; }
.mycart button { gap: 5px; font: 17px var(--lato); color: #7c9990; }
.mycart svg { width: 9px; height: 5px; color: var(--forest); }
.countries { left: 1874px; top: 255px; width: 78px; height: 41px; padding: 6px 0 3px 4px; background: #f2f2f2; }
.countries .sel { background: #e9e9e9; border-bottom: 3px solid #c6c6c6; }
.countries select { padding-left: 7px; font: 10px var(--lato); color: #999; }
.countries .sel > svg { right: 14px; width: 6px; height: 4px; }
.category { left: 1723px; top: 312px; width: 378px; height: 58px; padding: 8px 10px 14px 11px; }
.category .sel { border: 1px solid #d5d9dc; border-radius: 8px; }
.category select { padding-left: 13px; font: 13px var(--roboto); color: #aaa; }
.category .sel > svg { width: 7px; height: 4px; right: 5px; }
.yellow { left: 1712px; top: 404px; width: 162px; height: 28px; padding: 5px 25px 6px 7px; }
.yellow input { flex: 1; padding-left: 3px; border: 1px solid #f3cc62; border-radius: 0; font: 9px var(--arial); }
.pin.yellow > button { flex: 0 0 9px; border: 1px solid #f3cc62; border-left: 0; border-radius: 0; background: linear-gradient(#eee, #aaa); }
.yellow svg, .combo svg { width: 5px; height: 3px; color: #333; }
.dynamic { left: 1697px; top: 460px; width: 155px; height: 22px; padding: 4px 3px 7px 2px; }
.dynamic .sel { border: 1px solid #ccc; border-radius: 1px; }
.dynamic select { padding-left: 1px; font: 6px var(--lato); color: #888; }
.dynamic .sel > svg { width: 3px; right: 3px; }
.dates { left: 1723px; top: 535px; width: 201px; height: 105px; background: linear-gradient(#f9f9fd 40px, #eee 40px, #fff 41px); font: 11px var(--arial); color: #444; }
.dates header { flex: 1; display: flex; gap: 8px; height: 38px; padding: 6px 0; align-items: stretch; }
.dates header span { width: 6px; direction: rtl; line-height: 26px; color: #a5aabb; }
.dates header .sel { border: 1px solid #ccc; border-radius: 3px; }
.dates select { padding-left: 5px; }
.dates .sel .chev { width: 12px; height: 8px; }
.dates header button { width: 9px; padding-left: 5px; justify-content: flex-start; overflow: hidden; background: #5d78fb; color: #fff; border-radius: 2px 0 0 2px; }
.dates > a { position: absolute; right: 1px; top: 69px; color: #8496fb; }
.dates ul { position: absolute; left: 15px; top: 34px; width: 169px; background: #fff; border: 1px solid #ccc; border-top: 0; box-shadow: 0 2px 3px #bbb; font: 11px/25px var(--noto); color: #666; }
.dates li { padding-left: 10px; }
.dates .on { background: #2f7bd3; color: #fff; }
.combo { left: 1724px; top: 684px; width: 263px; height: 175px; padding: 7px 5px 0 8px; flex-direction: column; font: 9px var(--arial); color: #333; }
.combo-field { display: flex; height: 22px; border: 1px solid #d0d0d0; border-bottom-color: #aaa; }
.combo-field input { flex: 1; padding: 0 6px; font-size: 11px; }
.combo-field button { width: 63px; padding-right: 7px; justify-content: flex-end; background: #e9e9e9; border-radius: 0; }
.combo ul { height: 136px; padding: 2px; border: 1px solid #ccc; border-top: 0; box-shadow: 0 2px 3px #bbb; }
.combo li { position: relative; height: 17px; padding-left: 2px; line-height: 16px; border: 1px solid transparent; }
.combo .on { background: #e8e8e8; border-color: #a5bcd8; border-radius: 2px; }
.combo li svg { position: absolute; left: 31px; top: 4px; width: 6px; height: 9px; }
.combo-next { flex: 1; width: 186px; border: solid #ddd; border-width: 0 1px; }
.cap { display: flex; align-items: center; gap: 4px; font: bold 11px var(--narrow); color: #b0cc56; }
.cap b { padding: 2px 4px; background: #efefef; border-radius: 2px; font: bold 8px var(--roboto); color: #555; }
em { color: #e8332c; align-self: flex-start; }
.brand { left: 2460px; top: 112px; width: 140px; height: 58px; padding: 7px 12px 6px 6px; flex-direction: column; gap: 6px; }
.brand .cap { height: 14px; font-size: 10px; }
.brand select { padding: 0 4px; border: 1px solid #d5d5d5; border-radius: 2px; font: bold 10px var(--narrow); color: #333; }
.comm { left: 2398px; top: 286px; width: 225px; height: 62px; padding: 2px 5px 7px; flex-direction: column; gap: 7px; }
.comm .cap { height: 17px; font-size: 12px; }
.comm .cap b { font-size: 9px; }
.comm .sel { background: #efefef; }
.comm .sel span { position: absolute; right: 7px; top: 0; bottom: 0; width: 14px; display: flex; align-items: center; justify-content: center; border: 1px solid #999; pointer-events: none; }
.comm span svg { width: 8px; height: 6px; }
.choice { left: 2250px; top: 371px; width: 357px; height: 79px; padding: 16px 0 12px 16px; flex-direction: column; gap: 4px; background: #f6f6f6; }
.choice p { margin: 0 4px; font: italic 10px/12px var(--arial); color: #777; }
.choice-row { flex: 1; display: flex; gap: 1px; width: 337px; border: 1px solid #e8e8e8; background: #e5e5e5; }
.choice select { padding-left: 13px; font: 11px var(--lato); color: #555; }
.choice .sel > svg { width: 7px; height: 4px; right: 15px; }
.type { left: 2374px; top: 493px; width: 238px; height: 27px; padding: 4px 6px 5px 9px; align-items: center; gap: 2px; background: #efefef; font: bold 8px var(--narrow); color: #444; }
.type > svg { width: 7px; height: 7px; }
.type em { padding-top: 5px; }
.type .sel { flex: 0 0 175px; height: 19px; margin-left: auto; border: 1px solid #ddd; border-radius: 3px; }
.type .sel > svg { width: 4px; color: #333; }

/* Text fields */
.adresse { left: 2664px; top: 126px; width: 216px; height: 60px; padding: 7px 13px 5px; background: #222; border-bottom: 1px solid #888; }
.adresse textarea { flex: 1; padding: 6px 4px; background: #333; border-radius: 10px; color: #ccc; font: 8px var(--roboto); }
.sliver { left: 2893px; top: 126px; width: 6px; height: 54px; }
.address { left: 2664px; top: 194px; width: 216px; height: 56px; padding: 4px 7px 8px; flex-direction: column; gap: 7px; background: #f3f3f3; }
.address label { padding-left: 1px; font: 11px/12px var(--lato); color: #999; }
.address input { flex: 1; padding: 0 9px; background: #fff; border: 1px solid #3a7a60; border-radius: 7px; font: bold 12px var(--lato); color: #3d705b; }
.form { left: 2653px; top: 412px; right: 0; height: 133px; padding: 8px 0 0 8px; flex-direction: column; font: italic bold 7px var(--arial); color: #444; }
.form .cap { height: 13px; margin-bottom: 7px; font-size: 10px; }
.form input { height: 24px; padding: 0 6px; margin-bottom: 23px; background: #efefef; }
.form textarea { flex: 1; padding: 6px; background: #efefef; white-space: nowrap; }
.rechercher { left: 2664px; top: 567px; width: 156px; height: 44px; padding: 6px 16px 7px; background: #f1f1f1; }
.rechercher div { flex: 1; display: flex; align-items: center; padding: 0 3px 0 23px; background: #fff; border: 2px solid #f2a65e; border-radius: 16px; font: 9px var(--arial); color: #777; }
.rechercher input { flex: 1; }
.rechercher button { width: 19px; height: 19px; border-radius: 50%; background: #ef6f75; }
.rechercher svg { width: 8px; height: 8px; }
.comments { left: 2644px; top: 631px; right: 0; height: 82px; padding: 11px 0 8px 7px; align-items: center; gap: 11px; background: linear-gradient(#cdd7e4, #e0e4eb); font: 6px var(--lato); color: #666; }
.comments textarea { flex: 1; height: 63px; background: #fff; border: 1px solid #b5bfca; border-right: 0; border-radius: 0; }
```
